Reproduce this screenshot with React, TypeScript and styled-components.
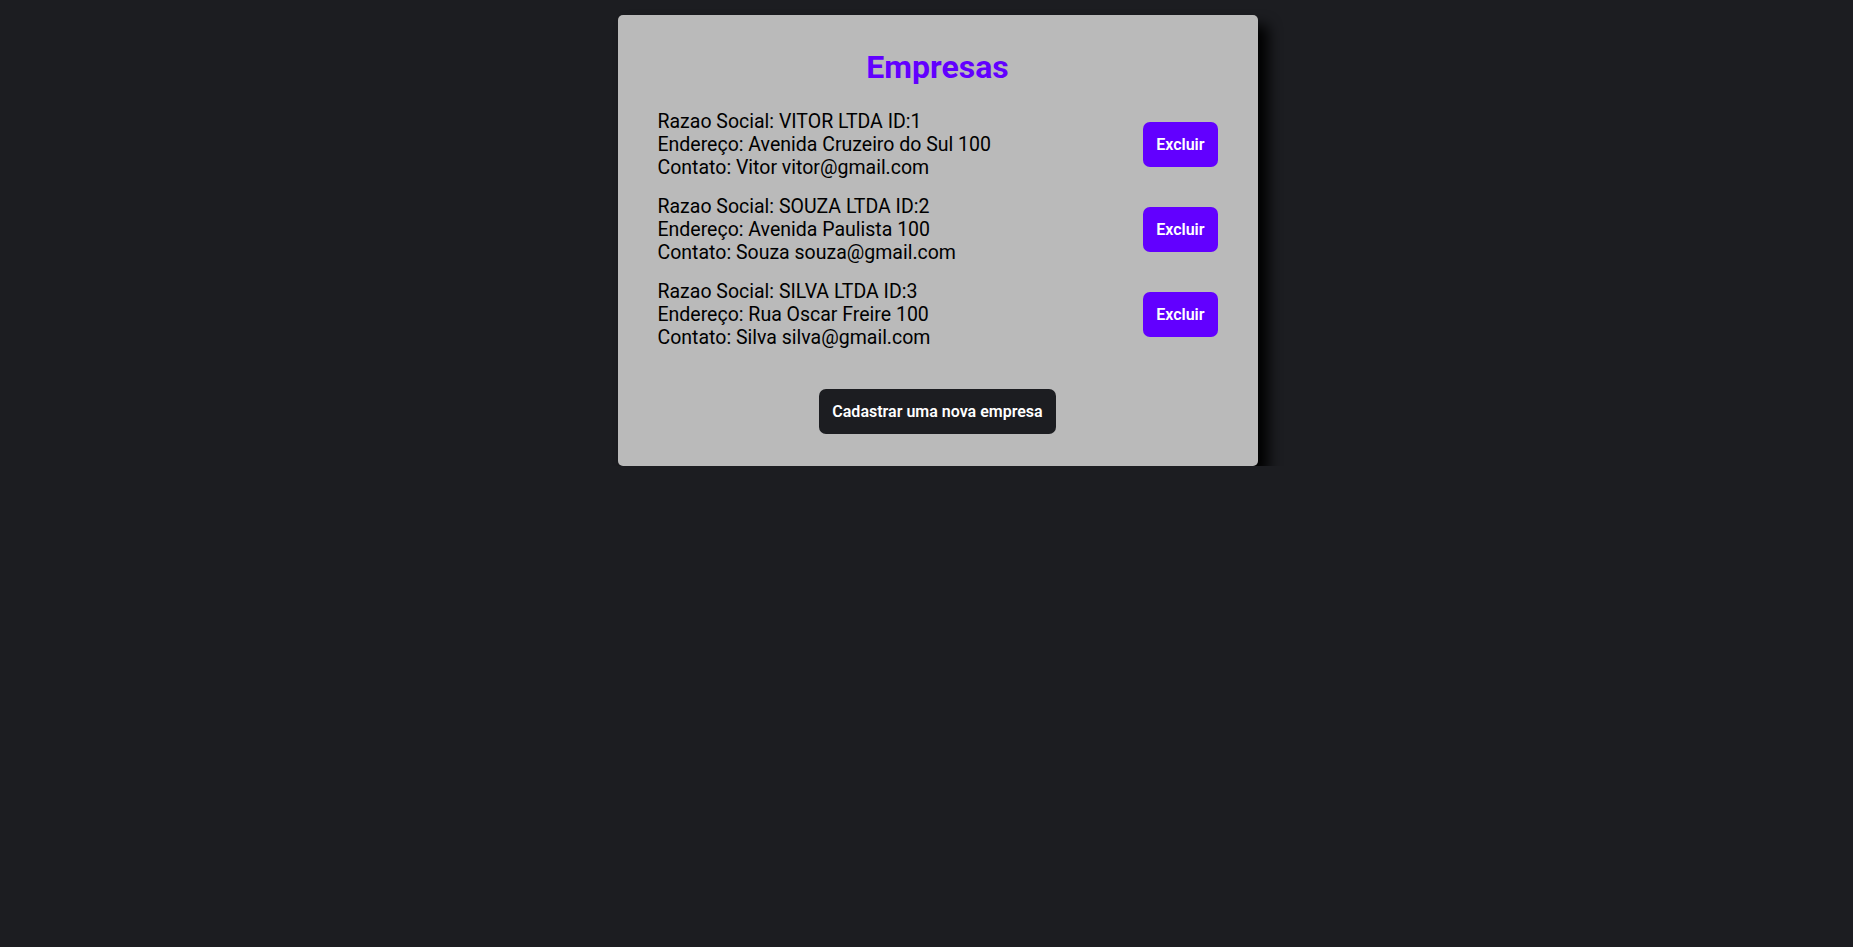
import React from 'react';
import styled, { createGlobalStyle } from 'styled-components';

const GlobalStyle = createGlobalStyle`
  body {
    margin: 0;
    background: #1c1d21;
    font-family: Roboto, "Liberation Sans", Arial, sans-serif;
  }
`;

const Wrapper = styled.div`
  display: flex;
  justify-content: center;
  padding: 15px 0 0 22px;
`;

const Card = styled.div`
  width: 640px;
  box-sizing: border-box;
  padding: 33px 40px 32px;
  background: #bababa;
  border-radius: 5px;
  box-shadow: 10px 10px 14px #000;
`;

const Title = styled.h1`
  margin: 0;
  font-size: 32px;
  line-height: 38px;
  font-weight: 700;
  text-align: center;
  color: #6200ff;
`;

const List = styled.div`
  margin-top: 24px;
  display: flex;
  flex-direction: column;
  gap: 16px;
`;

const Row = styled.div`
  display: flex;
  align-items: center;
  justify-content: space-between;
`;

const Info = styled.div`
  font-size: 19.5px;
  font-weight: 400;
  line-height: 23px;
  color: #000;
`;

const Button = styled.button<{ $variant?: 'danger' | 'dark' }>`
  height: 45px;
  padding: 0 13px;
  border: none;
  border-radius: 7px;
  font-family: inherit;
  font-size: 16px;
  font-weight: 600;
  color: #fff;
  background: ${({ $variant }) => ($variant === 'dark' ? '#1c1d21' : '#6200ff')};
  cursor: pointer;
`;

const Footer = styled.div`
  margin-top: 40px;
  display: flex;
  justify-content: center;
`;

const empresas = [
  { id: 1, razao: 'VITOR LTDA', endereco: 'Avenida Cruzeiro do Sul 100', contato: 'Vitor vitor@gmail.com' },
  { id: 2, razao: 'SOUZA LTDA', endereco: 'Avenida Paulista 100', contato: 'Souza souza@gmail.com' },
  { id: 3, razao: 'SILVA LTDA', endereco: 'Rua Oscar Freire 100', contato: 'Silva silva@gmail.com' },
];

export default function App() {
  return (
    <>
      <GlobalStyle />
      <Wrapper>
        <Card>
          <Title>Empresas</Title>
          <List>
            {empresas.map((e) => (
              <Row key={e.id}>
                <Info>
                  <div>Razao Social: {e.razao} ID:{e.id}</div>
                  <div>Endereço: {e.endereco}</div>
                  <div>Contato: {e.contato}</div>
                </Info>
                <Button>Excluir</Button>
              </Row>
            ))}
          </List>
          <Footer>
            <Button $variant="dark">Cadastrar uma nova empresa</Button>
          </Footer>
        </Card>
      </Wrapper>
    </>
  );
}
